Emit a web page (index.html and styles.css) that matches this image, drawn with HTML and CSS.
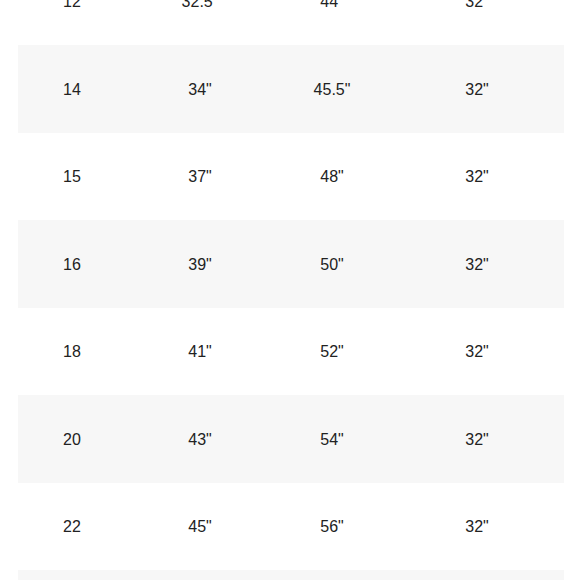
FILE: index.html
```html
<!DOCTYPE html>
<html>
<head>
<meta charset="utf-8">
<link rel="stylesheet" href="styles.css">
</head>
<body>
<div class="table">
  <div class="row"><span>12</span><span>32.5"</span><span>44"</span><span>32"</span></div>
  <div class="row alt"><span>14</span><span>34"</span><span>45.5"</span><span>32"</span></div>
  <div class="row"><span>15</span><span>37"</span><span>48"</span><span>32"</span></div>
  <div class="row alt"><span>16</span><span>39"</span><span>50"</span><span>32"</span></div>
  <div class="row"><span>18</span><span>41"</span><span>52"</span><span>32"</span></div>
  <div class="row alt"><span>20</span><span>43"</span><span>54"</span><span>32"</span></div>
  <div class="row"><span>22</span><span>45"</span><span>56"</span><span>32"</span></div>
  <div class="row alt"><span>24</span><span>47"</span><span>58"</span><span>32"</span></div>
</div>
</body>
</html>
```
FILE: styles.css
```css
html, body {
  margin: 0;
  padding: 0;
  background: #ffffff;
  overflow: hidden;
}
body {
  font-family: "Liberation Sans", Arial, sans-serif;
  color: #222222;
  font-size: 16px;
}
.table {
  margin: -42.5px 16px 0 18px;
  width: 546px;
}
.row {
  display: grid;
  grid-template-columns: 108px 148px 116px 174px;
  height: 87.5px;
  align-items: center;
}
.row span {
  text-align: center;
  padding-top: 2px;
}
.alt {
  background: #f7f7f7;
}
```
